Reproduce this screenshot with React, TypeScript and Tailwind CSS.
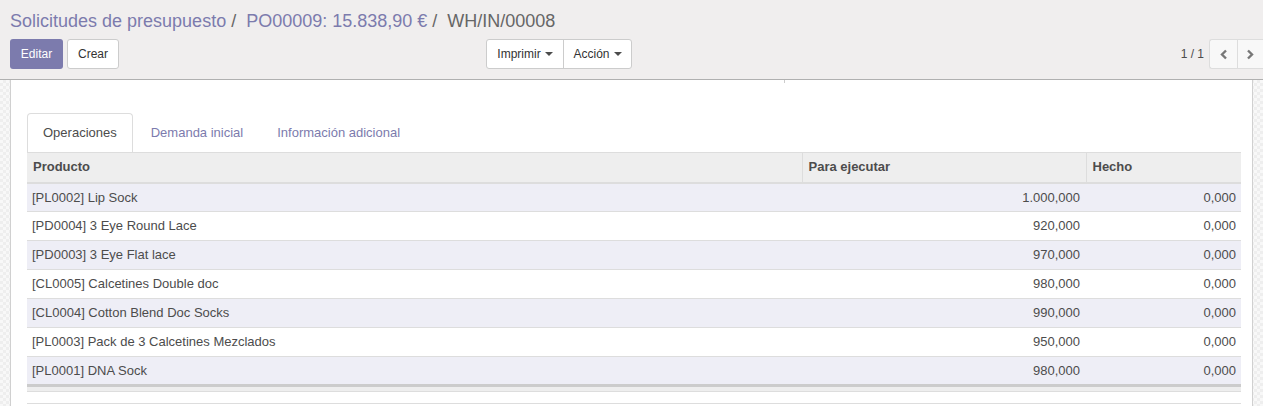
import React from "react";

const rows = [
  ["[PL0002] Lip Sock", "1.000,000", "0,000"],
  ["[PD0004] 3 Eye Round Lace", "920,000", "0,000"],
  ["[PD0003] 3 Eye Flat lace", "970,000", "0,000"],
  ["[CL0005] Calcetines Double doc", "980,000", "0,000"],
  ["[CL0004] Cotton Blend Doc Socks", "990,000", "0,000"],
  ["[PL0003] Pack de 3 Calcetines Mezclados", "950,000", "0,000"],
  ["[PL0001] DNA Sock", "980,000", "0,000"],
];

const Caret = () => (
  <span className="inline-block ml-[4px] align-middle w-0 h-0 border-l-[4px] border-r-[4px] border-t-[4px] border-l-transparent border-r-transparent border-t-[#4c4c4c]" />
);

export default function App() {
  return (
    <div
      className="w-[1263px] h-[406px] overflow-hidden bg-white text-[13px] text-[#4c4c4c]"
      style={{ fontFamily: '"Liberation Sans", Arial, sans-serif' }}
    >
      {/* Control panel */}
      <div className="h-[80px] bg-[#f0eeee] border-b border-[#b0b0b0] pl-[10px] flex flex-col">
        <div className="h-[39px] flex items-center text-[18px] leading-none pt-[2px]">
          <span className="text-[#7c7bad]">Solicitudes de presupuesto</span>
          <span className="text-[#666] ml-[5px] mr-[10px]">/</span>
          <span className="text-[#7c7bad]">PO00009: 15.838,90 €</span>
          <span className="text-[#666] ml-[5px] mr-[10px]">/</span>
          <span className="text-[#666]">WH/IN/00008</span>
        </div>
        <div className="h-[30px] flex items-center">
          <div className="w-[466px] flex gap-[4px]">
            <button className="h-[30px] w-[53px] rounded-[3px] bg-[#7c7bad] text-white text-[12px]">Editar</button>
            <button className="h-[30px] w-[52px] rounded-[3px] bg-white border border-[#ccc] text-[#333] text-[12px]">Crear</button>
          </div>
          <div className="flex ml-[10px] h-[30px] rounded-[3px] border border-[#ccc] bg-white text-[12px] text-[#333]">
            <button className="h-full w-[76px] flex items-center justify-center">Imprimir<Caret /></button>
            <button className="h-full w-[68px] border-l border-[#ccc] flex items-center justify-center">Acción<Caret /></button>
          </div>
          <div className="flex-1" />
          <span className="text-[12px] text-[#4c4c4c] mr-[5px]">1 / 1</span>
          <div className="flex h-[30px] rounded-l-[3px] border border-r-0 border-[#ddd] bg-[#f8f8f8]">
            <button className="w-[27px] h-full flex items-center justify-center text-[#777]">
              <svg width="9" height="11" viewBox="0 0 9 11"><path d="M7 1.5 L3 5.5 L7 9.5" stroke="#777" strokeWidth="2.4" fill="none" /></svg>
            </button>
            <button className="w-[26px] h-full border-l border-[#ddd] flex items-center justify-center">
              <svg width="9" height="11" viewBox="0 0 9 11"><path d="M2 1.5 L6 5.5 L2 9.5" stroke="#777" strokeWidth="2.4" fill="none" /></svg>
            </button>
          </div>
        </div>
      </div>

      {/* Body */}
      <div className="flex h-[326px] bg-[repeating-conic-gradient(#eeeeee_0%_25%,#f8f8f8_0%_50%)] bg-[length:6px_6px]">
        <div className="w-[10px]" />
        <div className="w-[1243px] bg-white border-l border-r border-[#d0d0d0] pl-[16px] pr-[11px] relative">
          <div className="absolute left-[773px] top-0 w-px h-[3px] bg-[#ccc]" />
          <div className="h-[33px]" />
          {/* Tabs */}
          <div className="flex h-[39px]">
            <div className="h-[39px] px-[15px] rounded-t-[4px] border border-b-0 border-[#ddd] flex items-center text-[#4c4c4c] mr-[2px]">Operaciones</div>
            <div className="h-[39px] px-[16px] flex items-center text-[#7c7bad] mr-[2px]">Demanda inicial</div>
            <div className="h-[39px] px-[16px] flex items-center text-[#7c7bad]">Información adicional</div>
          </div>
          {/* Table */}
          <table className="w-[1214px] border-collapse table-fixed">
            <colgroup>
              <col className="w-[775px]" />
              <col className="w-[284px]" />
              <col className="w-[155px]" />
            </colgroup>
            <thead>
              <tr className="h-[30px] bg-[#eeeeee] border-t border-[#dddddd] border-b-2 border-b-[#dddddd]">
                <th className="text-left font-bold px-[6px] pb-[2px] text-[#4c4c4c]">Producto</th>
                <th className="text-left font-bold px-[6px] pb-[2px] border-l border-[#dddddd] text-[#4c4c4c]">Para ejecutar</th>
                <th className="text-left font-bold px-[6px] pb-[2px] border-l border-[#dddddd] text-[#4c4c4c]">Hecho</th>
              </tr>
            </thead>
            <tbody>
              {rows.map((r, i) => (
                <tr key={i} className={`h-[29px] border-b border-[#dddddd] ${i % 2 === 0 ? "bg-[#eeeef6]" : "bg-white"}`}>
                  <td className="px-[5px] text-[#4c4c4c]">{r[0]}</td>
                  <td className="px-[6px] text-right">{r[1]}</td>
                  <td className="px-[5px] text-right">{r[2]}</td>
                </tr>
              ))}
            </tbody>
            <tfoot>
              <tr className="h-[6px] bg-[#eeeeee] border-t-[3px] border-[#cccccc] border-b border-b-[#dddddd]">
                <td colSpan={3}></td>
              </tr>
            </tfoot>
          </table>
          <div className="w-[1214px] h-[11px]" />
          <div className="w-[1214px] h-px bg-[#dddddd]" />
        </div>
        <div className="flex-1" />
      </div>
    </div>
  );
}
